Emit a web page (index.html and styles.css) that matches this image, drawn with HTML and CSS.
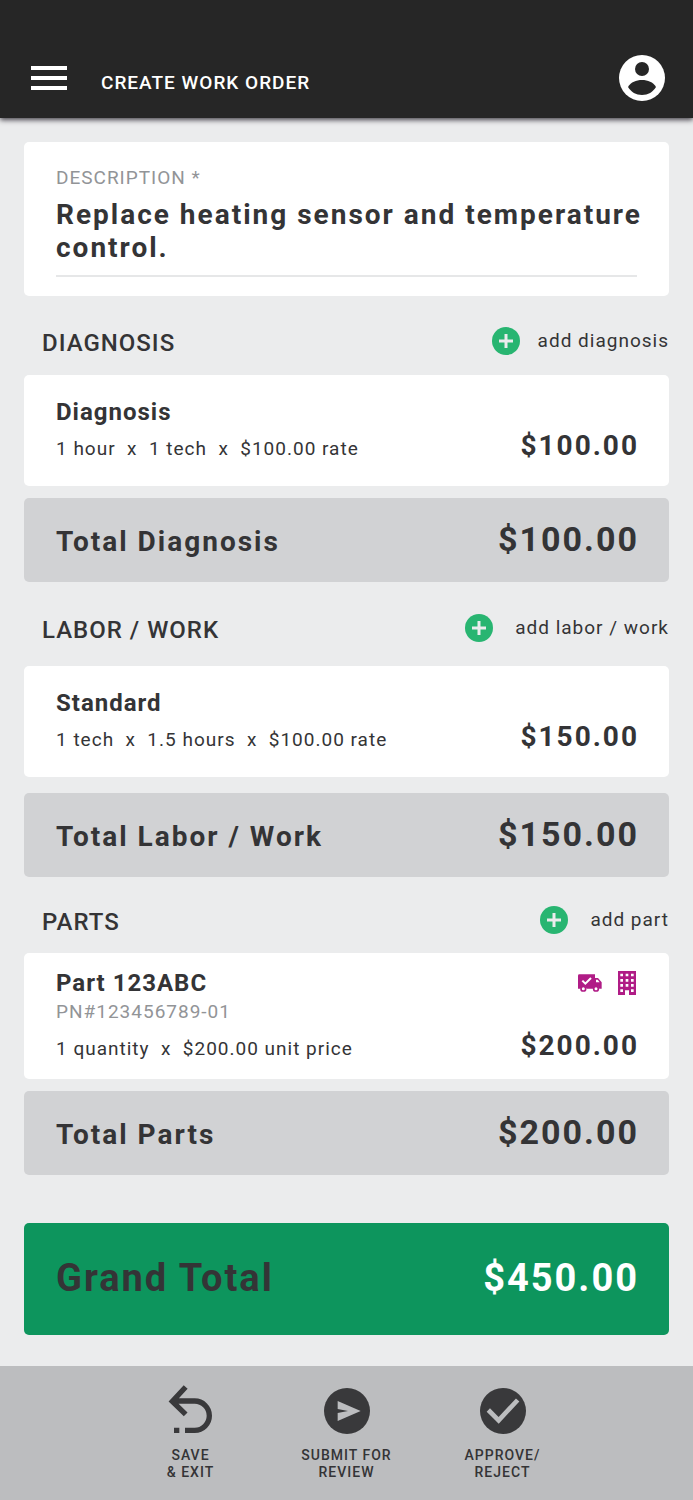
FILE: index.html
```html
<!DOCTYPE html>
<html lang="en">
<head>
<meta charset="utf-8">
<meta name="viewport" content="width=device-width, initial-scale=1">
<title>Create Work Order</title>
<link rel="stylesheet" href="styles.css">
</head>
<body>
<header class="topbar">
  <button class="icon-button" type="button" aria-label="Menu">
    <svg width="36" height="26" viewBox="0 0 36 26" fill="#fff"><path d="M0 1h36v4H0zM0 11h36v4H0zM0 21h36v4H0z"/></svg>
  </button>
  <h1 class="topbar-title">CREATE WORK ORDER</h1>
  <button class="icon-button" type="button" aria-label="Account">
    <svg width="46" height="46" viewBox="0 0 46 46"><circle cx="23" cy="23" r="23" fill="#fff"/><circle cx="23" cy="14" r="7" fill="#262626"/><path d="M9 32C12 27 17 25 23 25s11 2 14 7c-3 5-8 8-14 8S12 37 9 32z" fill="#262626"/></svg>
  </button>
</header>

<main class="content">
  <div class="card description">
    <label class="description-label" for="description">DESCRIPTION *</label>
    <div class="description-field">
      <textarea class="description-input" id="description" rows="2" required>Replace heating sensor and temperature control.</textarea>
    </div>
  </div>

  <section>
    <div class="section-head">
      <h2 class="section-title">DIAGNOSIS</h2>
      <button class="add-button" type="button">
        <svg width="28" height="28" viewBox="0 0 28 28"><circle cx="14" cy="14" r="14" fill="#28b571"/><path d="M14 7v14M7 14h14" stroke="#ebeced" stroke-width="3"/></svg>
        add diagnosis
      </button>
    </div>
    <div class="card item">
      <h3 class="item-title">Diagnosis</h3>
      <div class="item-row">
        <span class="item-meta">1 hour  x  1 tech  x  $100.00 rate</span>
        <span class="item-amount">$100.00</span>
      </div>
    </div>
    <div class="total">
      <span class="total-label">Total Diagnosis</span>
      <span class="total-amount">$100.00</span>
    </div>
  </section>

  <section>
    <div class="section-head section-head-labor">
      <h2 class="section-title">LABOR / WORK</h2>
      <button class="add-button add-button-wide" type="button">
        <svg width="28" height="28" viewBox="0 0 28 28"><circle cx="14" cy="14" r="14" fill="#28b571"/><path d="M14 7v14M7 14h14" stroke="#ebeced" stroke-width="3"/></svg>
        add labor / work
      </button>
    </div>
    <div class="card item">
      <h3 class="item-title">Standard</h3>
      <div class="item-row">
        <span class="item-meta">1 tech  x  1.5 hours  x  $100.00 rate</span>
        <span class="item-amount">$150.00</span>
      </div>
    </div>
    <div class="total total-labor">
      <span class="total-label">Total Labor / Work</span>
      <span class="total-amount">$150.00</span>
    </div>
  </section>

  <section>
    <div class="section-head section-head-parts">
      <h2 class="section-title">PARTS</h2>
      <button class="add-button add-button-wide" type="button">
        <svg width="28" height="28" viewBox="0 0 28 28"><circle cx="14" cy="14" r="14" fill="#28b571"/><path d="M14 7v14M7 14h14" stroke="#ebeced" stroke-width="3"/></svg>
        add part
      </button>
    </div>
    <div class="card item item-part">
      <div class="item-head">
        <h3 class="item-title">Part 123ABC</h3>
        <div class="item-icons">
          <svg width="24" height="18" viewBox="0 0 72 54"><path d="M4 1H51V12H60L71 25V44H64A10 10 0 0 0 45 44H26A10 10 0 0 0 7 44H0V5Q0 1 4 1z" fill="#b01c86"/><path d="M54 17h5l6 8H54z" fill="#fff"/><path d="M13 20l9 9L39 12" fill="none" stroke="#fff" stroke-width="6"/><circle cx="16" cy="44" r="7" fill="#fff" stroke="#b01c86" stroke-width="5"/><circle cx="54" cy="44" r="7" fill="#fff" stroke="#b01c86" stroke-width="5"/></svg>
          <svg width="18" height="24" viewBox="0 0 54 72"><path fill="#b01c86" d="M0 0h54v72H33V58H21v14H0z"/><path fill="#fff" d="M7 8h8v8H7zM23 8h8v8h-8zM39 8h8v8h-8zM7 24h8v8H7zM23 24h8v8h-8zM39 24h8v8h-8zM7 39h8v8H7zM23 39h8v8h-8zM39 39h8v8h-8zM7 55h8v8H7zM39 55h8v8h-8z"/></svg>
        </div>
      </div>
      <p class="item-number">PN#123456789-01</p>
      <div class="item-row">
        <span class="item-meta">1 quantity  x  $200.00 unit price</span>
        <span class="item-amount">$200.00</span>
      </div>
    </div>
    <div class="total">
      <span class="total-label">Total Parts</span>
      <span class="total-amount">$200.00</span>
    </div>
  </section>

  <div class="grand-total">
    <span>Grand Total</span>
    <span class="grand-amount">$450.00</span>
  </div>
</main>

<footer class="actions">
  <button class="action" type="button">
    <svg width="46" height="50" viewBox="0 0 138 150" fill="none" stroke="#39393b" stroke-width="16"><path d="M53 6L13 49L53 88M15 48H80A44 44 0 0 1 80 136H51M18 136h16"/></svg>
    <span>SAVE<br>&amp; EXIT</span>
  </button>
  <button class="action" type="button">
    <svg width="46" height="50" viewBox="0 0 138 150"><circle cx="69" cy="78" r="69" fill="#39393b"/><path d="M41 48L110 78L41 108V84L72 78L41 72z" fill="#bcbdbf"/></svg>
    <span>SUBMIT FOR<br>REVIEW</span>
  </button>
  <button class="action" type="button">
    <svg width="46" height="50" viewBox="0 0 138 150"><circle cx="69" cy="78" r="69" fill="#39393b"/><path d="M25 75L56 106L113 45" fill="none" stroke="#bcbdbf" stroke-width="14"/></svg>
    <span>APPROVE/<br>REJECT</span>
  </button>
</footer>
</body>
</html>
```
FILE: styles.css
```css
* {
  box-sizing: border-box;
}

body {
  display: flex;
  flex-direction: column;
  min-height: 100vh;
  margin: 0;
  background: #ebeced;
  color: #343436;
  font-family: Roboto, sans-serif;
  letter-spacing: 2px;
}

h1, h2, h3, p {
  margin: 0;
}

button, textarea {
  padding: 0;
  border: 0;
  background: none;
  color: inherit;
  font: inherit;
  letter-spacing: inherit;
}

button {
  cursor: pointer;
}

svg {
  display: block;
  flex: none;
}

.topbar {
  display: flex;
  align-items: center;
  padding: 55px 28px 17px 31px;
  background: #262626;
  color: #fff;
  box-shadow: 0 2px 5px rgba(30, 25, 35, 0.8);
}

.topbar-title {
  flex: 1;
  padding: 10px 0 0 34px;
  font-size: 19px;
  font-weight: 500;
  line-height: 24px;
  letter-spacing: 1px;
}

.content {
  flex: 1;
  padding: 24px 24px 31px;
}

.card {
  border-radius: 5px;
  background: #fff;
}

.description {
  padding: 24px 32px 19px;
}

.description-label {
  display: block;
  color: #929497;
  font-size: 19px;
  line-height: 24px;
  letter-spacing: 1px;
}

.description-field {
  padding: 8px 0 11px;
  border-bottom: 2px solid #e6e7e8;
}

.description-input {
  display: block;
  width: calc(100% + 12px);
  height: 66px;
  outline: 0;
  overflow: hidden;
  resize: none;
  font-size: 28px;
  font-weight: 700;
  line-height: 33px;
}

.section-head {
  display: flex;
  align-items: center;
  justify-content: space-between;
  padding: 31px 0 20px 18px;
}

.section-head-labor {
  padding-top: 32px;
  padding-bottom: 24px;
}

.section-head-parts {
  padding-top: 29px;
  padding-bottom: 19px;
}

.section-title {
  padding-top: 4px;
  font-size: 24px;
  font-weight: 500;
  line-height: 24px;
  letter-spacing: 1px;
}

.add-button {
  display: flex;
  align-items: center;
  gap: 18px;
  font-size: 19px;
  line-height: 24px;
  letter-spacing: 1px;
}

.add-button-wide {
  gap: 22px;
}

.item {
  padding: 23px 30px 22px 32px;
}

.item-part {
  padding-top: 16px;
  padding-bottom: 15px;
}

.item-head {
  display: flex;
  justify-content: space-between;
}

.item-title {
  font-size: 24px;
  font-weight: 700;
  line-height: 28px;
  letter-spacing: 1px;
}

.item-icons {
  display: flex;
  align-items: center;
  gap: 16px;
  padding-right: 3px;
}

.item-number {
  padding: 3px 0 4px;
  color: #929497;
  font-size: 19px;
  line-height: 24px;
  letter-spacing: 1px;
}

.item-row {
  display: flex;
  align-items: baseline;
  justify-content: space-between;
  padding-top: 2px;
}

.item-part .item-row {
  padding-top: 0;
}

.item-meta {
  font-size: 19px;
  line-height: 24px;
  letter-spacing: 1px;
  white-space: pre-wrap;
}

.item-amount {
  font-size: 28px;
  font-weight: 700;
  line-height: 36px;
}

.total {
  display: flex;
  align-items: baseline;
  justify-content: space-between;
  margin-top: 12px;
  padding: 20px 30px 22px 32px;
  border-radius: 5px;
  background: #d1d2d4;
  font-size: 28px;
  font-weight: 700;
}

.total-labor {
  margin-top: 16px;
}

.total-amount {
  font-size: 34px;
  line-height: 42px;
}

.grand-total {
  display: flex;
  align-items: center;
  justify-content: space-between;
  margin-top: 48px;
  padding: 31px 30px 33px 32px;
  border-radius: 5px;
  background: #0d955d;
  font-size: 38px;
  font-weight: 700;
  line-height: 48px;
}

.grand-amount {
  color: #fff;
}

.actions {
  display: flex;
  justify-content: center;
  padding: 19px 0;
  background: #bcbdbf;
}

.action {
  display: flex;
  flex-direction: column;
  align-items: center;
  gap: 12px;
  width: 156px;
  font-size: 14px;
  font-weight: 500;
  line-height: 17px;
  letter-spacing: 1px;
}
```
